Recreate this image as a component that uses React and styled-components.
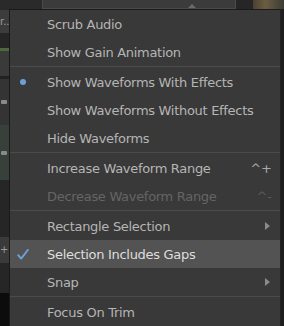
import React from "react";
import styled, { createGlobalStyle } from "styled-components";

const GlobalStyle = createGlobalStyle`
  html, body {
    margin: 0;
    padding: 0;
    background: #1c1c1c;
  }
  body {
    width: 284px;
    height: 326px;
    overflow: hidden;
    font-family: "DejaVu Sans", "Liberation Sans", sans-serif;
  }
`;

const items = [
  { label: "Scrub Audio" },
  { label: "Show Gain Animation" },
  { sep: true },
  { label: "Show Waveforms With Effects", mark: "dot" },
  { label: "Show Waveforms Without Effects" },
  { label: "Hide Waveforms" },
  { sep: true },
  { label: "Increase Waveform Range", shortcut: "^+" },
  { label: "Decrease Waveform Range", shortcut: "^-", disabled: true },
  { sep: true },
  { label: "Rectangle Selection", submenu: true },
  { label: "Selection Includes Gaps", mark: "check", active: true },
  { label: "Snap", submenu: true },
  { sep: true },
  { label: "Focus On Trim" },
];

const App = () => {
  return (
    <>
      <GlobalStyle />
      <Screen>
        <TopBar>
          <TopDark />
          <TopField />
          <TopGap />
          <Thumb />
        </TopBar>
        <SideStrip>
          <SideBlock $h={10} $bg="#2a2a2a" />
          <SideBlock $h={23} $bg="#3c3c3c">r..</SideBlock>
          <SideBlock $h={15} $bg="#262626" />
          <SideBlock $h={3} $bg="#4c6b3c" />
          <SideBlock $h={25} $bg="#3a3a3a" />
          <SideBlock $h={3} $bg="#222" />
          <SideBlock $h={46} $bg="#343434">
            <Lock />
          </SideBlock>
          <SideBlock $h={55} $bg="#38403b">
            <Lock />
          </SideBlock>
          <SideBlock $h={57} $bg="#262626" />
          <SideBlock $h={26} $bg="#3a3a3a">+</SideBlock>
          <SideBlock $h={30} $bg="#262626" />
          <SideBlock $h={33} $bg="#0c0c0c" />
        </SideStrip>

        <Caret />

        <Menu>
          {items.map((item, i) =>
            item.sep ? (
              <Separator key={i} />
            ) : (
              <Item key={i} $active={item.active} $disabled={item.disabled}>
                <MarkCell>
                  {item.mark === "dot" && <Dot />}
                  {item.mark === "check" && (
                    <svg width="12" height="11" viewBox="0 0 12 11">
                      <path
                        d="M1.2 6.2 L4.2 9.6 L10.8 1"
                        fill="none"
                        stroke="#6d9fd6"
                        strokeWidth="2"
                        strokeLinecap="round"
                        strokeLinejoin="round"
                      />
                    </svg>
                  )}
                </MarkCell>
                <Label>{item.label}</Label>
                {item.shortcut && (
                  <Shortcut $disabled={item.disabled}>{item.shortcut}</Shortcut>
                )}
                {item.submenu && <SubArrow />}
              </Item>
            )
          )}
        </Menu>
      </Screen>
    </>
  );
};

const Screen = styled.div`
  position: relative;
  width: 284px;
  height: 326px;
  background: #1e1e1e;
  overflow: hidden;
`;

const TopBar = styled.div`
  display: flex;
  height: 9px;
  background: #282828;
`;

const TopDark = styled.div`
  width: 42px;
  background: #2a2a2a;
`;

const TopField = styled.div`
  width: 194px;
  background: #3b3b3b;
  border: 1px solid #4a4a4a;
  border-top: none;
  box-sizing: border-box;
`;

const TopGap = styled.div`
  width: 17px;
  background: #262626;
`;

const Thumb = styled.div`
  flex: 1;
  background: linear-gradient(90deg, #4a4232 0%, #6b5d43 40%, #3a3c34 100%);
`;

const SideStrip = styled.div`
  display: flex;
  flex-direction: column;
  width: 9px;
  margin-top: -9px;
`;

const SideBlock = styled.div`
  height: ${(p) => p.$h}px;
  background: ${(p) => p.$bg};
  color: #9a9a9a;
  font-size: 10px;
  line-height: ${(p) => p.$h}px;
  overflow: hidden;
  white-space: nowrap;
  display: flex;
  align-items: center;
`;

const Lock = styled.div`
  width: 6px;
  height: 4px;
  margin-left: 1px;
  background: #8a8a8a;
  border-radius: 1px;
`;

const Caret = styled.div`
  position: absolute;
  left: 188px;
  top: 4px;
  width: 0;
  height: 0;
  border-left: 4px solid transparent;
  border-right: 4px solid transparent;
  border-bottom: 4px solid #6a6a6a;
`;

const Menu = styled.div`
  position: absolute;
  left: 9px;
  top: 9px;
  width: 272px;
  height: 317px;
  box-sizing: border-box;
  background: #393939;
  border: 1px solid #1a1a1a;
  border-right-color: #222;
  border-bottom: none;
  display: flex;
  flex-direction: column;
  overflow: hidden;
`;

const Item = styled.div`
  display: flex;
  align-items: center;
  flex: none;
  height: 28px;
  padding-right: 10px;
  background: ${(p) => (p.$active ? "#535353" : "transparent")};
  color: ${(p) =>
    p.$disabled ? "#656565" : p.$active ? "#dedede" : "#b5b5b5"};
  font-size: 13px;
`;

const MarkCell = styled.div`
  width: 37px;
  flex: none;
  display: flex;
  align-items: center;
  justify-content: flex-start;
  padding-left: 7px;
  box-sizing: border-box;
`;

const Dot = styled.div`
  width: 6px;
  height: 6px;
  margin-left: 3px;
  border-radius: 50%;
  background: #6d9fd6;
`;

const Label = styled.span`
  flex: 1;
  white-space: nowrap;
  letter-spacing: -0.3px;
`;

const Shortcut = styled.span`
  color: ${(p) => (p.$disabled ? "#5a5a5a" : "#a8a8a8")};
  font-size: 13px;
  margin-right: -2px;
`;

const SubArrow = styled.div`
  width: 0;
  height: 0;
  border-top: 4px solid transparent;
  border-bottom: 4px solid transparent;
  border-left: 5px solid #8a8a8a;
`;

const Separator = styled.div`
  flex: none;
  height: 1px;
  margin-bottom: 1px;
  background: #4b4b4b;
`;

export default App;
